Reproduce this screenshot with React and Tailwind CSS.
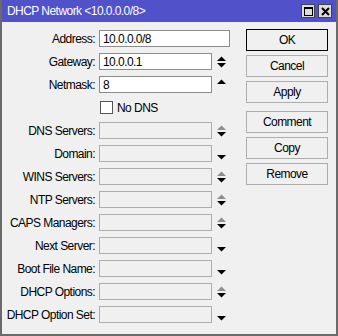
import React from "react";

function Arrows({ type }) {
  return (
    <div className="w-[18px] h-[17px] flex items-center justify-center">
      <svg width="9" height="12" viewBox="0 0 9 12">
        {(type === "both" || type === "up") && (
          <polygon points="0,5 4.5,0.5 9,5" fill="#000" />
        )}
        {type === "multi" && <polygon points="0,5 4.5,0.5 9,5" fill="#8e8e8e" />}
        {(type === "both" || type === "multi" || type === "down") && (
          <polygon points="0,7 9,7 4.5,11.5" fill="#000" />
        )}
      </svg>
    </div>
  );
}

function Row({ label, value, enabled, arrows, wide }) {
  return (
    <div className="flex items-center h-[17px] mb-[6px]">
      <div className="w-[94px] text-right pr-[1px] whitespace-nowrap">{label}</div>
      <div
        className={
          "ml-[3px] h-[17px] flex items-center pl-[3px] border " +
          (enabled ? "bg-white border-[#8c8c8c] " : "bg-[#f0f0f0] border-[#adadad] ") +
          (wide ? "w-[131px]" : "w-[113px]")
        }
      >
        {value}
      </div>
      {!wide && <Arrows type={arrows} />}
    </div>
  );
}

function Btn({ children, primary, className = "" }) {
  return (
    <div
      className={
        "h-[22px] w-[82px] flex items-center justify-center bg-[#f0f0f0] border " +
        (primary ? "border-black " : "border-[#adadad] ") +
        className
      }
    >
      {children}
    </div>
  );
}

export default function App() {
  return (
    <div className="w-[338px] h-[336px] flex flex-col bg-[#f0f0f0] border-l-2 border-r-2 border-b-2 border-[#6a6a6a] font-['Liberation_Sans',Arial,sans-serif] text-[12px] tracking-[-0.55px] text-black leading-none overflow-hidden">
      <div className="h-[22px] bg-[#5151c9] flex items-center pl-[5px] pr-[4px] shrink-0">
        <div className="flex-1 text-white">DHCP Network &lt;10.0.0.0/8&gt;</div>
        <div className="w-[14px] h-[14px] bg-[#dcdcdc] border border-[#444] flex items-center justify-center mr-[3px]">
          <div className="w-[9px] h-[9px] border border-black border-t-2"></div>
        </div>
        <div className="w-[14px] h-[14px] bg-[#dcdcdc] border border-[#444] flex items-center justify-center">
          <svg width="9" height="9" viewBox="0 0 9 9">
            <path d="M1 1 L8 8 M8 1 L1 8" stroke="#000" strokeWidth="2" />
          </svg>
        </div>
      </div>
      <div className="flex flex-1">
        <div className="flex flex-col pt-[8px]">
          <Row label="Address:" value="10.0.0.0/8" enabled wide />
          <Row label="Gateway:" value="10.0.0.1" enabled arrows="both" />
          <Row label="Netmask:" value="8" enabled arrows="up" />
          <div className="flex items-center h-[17px] mb-[6px]">
            <div className="w-[98px]"></div>
            <div className="w-[13px] h-[13px] bg-white border border-[#555]"></div>
            <div className="ml-[4px]">No DNS</div>
          </div>
          <Row label="DNS Servers:" arrows="multi" />
          <Row label="Domain:" arrows="down" />
          <Row label="WINS Servers:" arrows="multi" />
          <Row label="NTP Servers:" arrows="multi" />
          <Row label="CAPS Managers:" arrows="multi" />
          <Row label="Next Server:" arrows="down" />
          <Row label="Boot File Name:" arrows="down" />
          <Row label="DHCP Options:" arrows="multi" />
          <Row label="DHCP Option Set:" arrows="down" />
        </div>
        <div className="flex flex-col pt-[7px] ml-[16px] gap-[4px]">
          <Btn primary>OK</Btn>
          <Btn>Cancel</Btn>
          <Btn>Apply</Btn>
          <Btn className="mt-[4px]">Comment</Btn>
          <Btn>Copy</Btn>
          <Btn>Remove</Btn>
        </div>
      </div>
    </div>
  );
}
